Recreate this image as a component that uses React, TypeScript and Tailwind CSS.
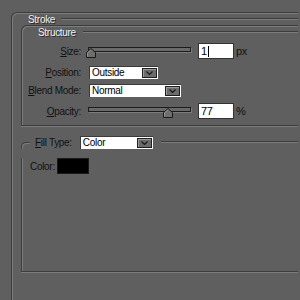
const dark = "border-[#3c3c3c]";

function Line({ className = "" }: { className?: string }) {
  return <div className={`h-[2px] flex-1 border-t border-[#3c3c3c] bg-[#7c7c7c] ${className}`} />;
}

function Chevron() {
  return (
    <svg width="7" height="4" viewBox="0 0 7 4">
      <path d="M0.5 0.5 L3.5 3.5 L6.5 0.5" fill="none" stroke="#1a1a1a" strokeWidth="1.2" />
    </svg>
  );
}

function Select({ value, width }: { value: string; width: string }) {
  return (
    <div className={`flex h-[13px] items-center border-l border-t border-[#3a3a3a] bg-white pl-[2px] text-black ${width}`}>
      <span className="flex-1 leading-none">{value}</span>
      <div className="mr-[1px] flex h-[10px] w-[15px] items-center justify-center border border-[#1e1e1e] bg-[#6c6c6c] shadow-[inset_1px_1px_0_#9a9a9a]">
        <Chevron />
      </div>
    </div>
  );
}

function Thumb({ className }: { className: string }) {
  return (
    <svg className={`absolute top-[5px] ${className}`} width="10" height="10" viewBox="0 0 10 10">
      <path d="M0.5 4.5 L5 0.5 L9.5 4.5 L9.5 9.5 L0.5 9.5 Z" fill="#6e6e6e" stroke="#1a1a1a" />
      <path d="M1.5 8.5 L1.5 5 L5 2" fill="none" stroke="#959595" />
    </svg>
  );
}

function Slider({ thumb }: { thumb: string }) {
  return (
    <div className="relative ml-[7px] h-full w-[103px] pt-[4px]">
      <div className="h-[5px] w-full border border-[#1c1c1c] bg-[#6a6a6a] shadow-[1px_1px_0_#7c7c7c]" />
      <Thumb className={thumb} />
    </div>
  );
}

function Field({ value, cursor }: { value: string; cursor?: boolean }) {
  return (
    <div className="ml-[7px] flex h-[16px] w-[36px] items-center border border-[#333333] bg-white pl-[2px] text-[11px] text-black">
      <span className="leading-none">{value}</span>
      {cursor && <span className="ml-[1px] h-[11px] w-[1px] bg-black" />}
    </div>
  );
}

function Label({ children }: { children: React.ReactNode }) {
  return <span className="w-[59px] text-right text-[#111111]">{children}</span>;
}

export default function App() {
  return (
    <div className="h-[300px] w-[300px] overflow-hidden bg-[#5f5f5f] font-['Liberation_Sans',Arial,sans-serif] text-[10px] tracking-[-0.3px]">
      <div className={`ml-[11px] mt-[12px] h-[288px] w-[287px] rounded-tl-[6px] border-l border-t ${dark} shadow-[inset_1px_1px_0_#7c7c7c]`}>
        <div className="flex h-[12px] items-center">
          <span className="pl-[16px] text-[#f0f0f0] [text-shadow:1px_1px_0_#2a2a2a]">Stroke</span>
          <Line className="ml-[6px]" />
        </div>

        <div className={`ml-[9px] h-[101px] rounded-tl-[6px] border-b border-l border-t ${dark} shadow-[inset_1px_1px_0_#7c7c7c,0_1px_0_#7c7c7c]`}>
          <div className="flex h-[12px] items-center">
            <span className="pl-[16px] text-[#f0f0f0] [text-shadow:1px_1px_0_#2a2a2a]">Structure</span>
            <Line className="ml-[7px]" />
          </div>

          <div className="mt-[5px] flex h-[16px] items-center">
            <Label><u>S</u>ize:</Label>
            <Slider thumb="left-[-2px]" />
            <Field value="1" cursor />
            <span className="ml-[2px] text-[11px] text-[#111111]">px</span>
          </div>

          <div className="mt-[6px] flex h-[14px] items-center">
            <Label><u>P</u>osition:</Label>
            <div className="ml-[8px]">
              <Select value="Outside" width="w-[69px]" />
            </div>
          </div>

          <div className="mt-[4px] flex h-[14px] items-center">
            <Label><u>B</u>lend Mode:</Label>
            <div className="ml-[8px]">
              <Select value="Normal" width="w-[92px]" />
            </div>
          </div>

          <div className="mt-[6px] flex h-[16px] items-center">
            <Label><u>O</u>pacity:</Label>
            <Slider thumb="left-[75px]" />
            <Field value="77" />
            <span className="ml-[2px] text-[11px] text-[#111111]">%</span>
          </div>
        </div>

        <div className="ml-[9px] mt-[9px] flex h-[14px] items-center">
          <div className={`h-[7px] w-[9px] self-end rounded-tl-[5px] border-l border-t ${dark} shadow-[inset_1px_1px_0_#7c7c7c]`} />
          <span className="ml-[5px] text-[#111111]"><u>F</u>ill Type:</span>
          <div className="ml-[8px]">
            <Select value="Color" width="w-[73px]" />
          </div>
          <Line className="ml-[8px]" />
        </div>
        <div className={`ml-[9px] h-[114px] border-b border-l ${dark} shadow-[inset_1px_0_0_#7c7c7c,0_1px_0_#7c7c7c]`}>
          <div className="mt-[9px] flex h-[16px] items-center pl-[8px]">
            <span className="text-[#111111]">Color:</span>
            <div className="ml-[2px] h-[16px] w-[32px] border border-[#1a1a1a] bg-black" />
          </div>
        </div>
      </div>
    </div>
  );
}
